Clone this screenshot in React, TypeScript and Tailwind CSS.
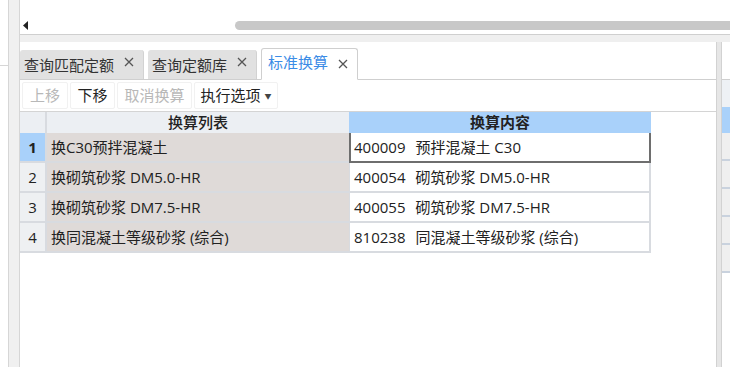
import React from 'react';

const rows = [
  { no: '1', name: '换C30预拌混凝土', code: '400009', text: '预拌混凝土 C30' },
  { no: '2', name: '换砌筑砂浆 DM5.0-HR', code: '400054', text: '砌筑砂浆 DM5.0-HR' },
  { no: '3', name: '换砌筑砂浆 DM7.5-HR', code: '400055', text: '砌筑砂浆 DM7.5-HR' },
  { no: '4', name: '换同混凝土等级砂浆 (综合)', code: '810238', text: '同混凝土等级砂浆 (综合)' },
];

const CloseIcon: React.FC = () => (
  <svg width="10" height="10" viewBox="0 0 10 10" className="shrink-0">
    <path d="M1 1 L9 9 M9 1 L1 9" stroke="#555" strokeWidth="1.3" fill="none" />
  </svg>
);

const Tab: React.FC<{ label: string; active?: boolean; width: string }> = ({ label, active, width }) => {
  if (active) {
    return (
      <div className={`${width} h-[32px] -mb-px flex items-center justify-between pl-[6px] pr-[9px] bg-white border border-[#cfcfcf] border-b-white rounded-t-[3px]`}>
        <span className="text-[15px] leading-none text-[#3b8ce6] pb-[3px]">{label}</span>
        <CloseIcon />
      </div>
    );
  }
  return (
    <div className={`${width} h-[29px] flex items-center justify-between pl-[4px] pr-[9px] bg-[#e1e1e1] rounded-t-[3px] border-r border-[#d2d2d2]`}>
      <span className="text-[15px] leading-none text-[#333] pt-[1px]">{label}</span>
      <div className="pb-[5px]"><CloseIcon /></div>
    </div>
  );
};

const ToolButton: React.FC<{ label: string; disabled?: boolean; width: string; caret?: boolean }> = ({ label, disabled, width, caret }) => (
  <div className={`${width} h-[27px] flex items-center justify-center gap-[4px] border border-[#f1f1f1] rounded-[2px] text-[15px] leading-none ${disabled ? 'text-[#b8b8b8]' : 'text-[#222]'}`}>
    <span>{label}</span>
    {caret && <span className="text-[7px] text-[#444] pt-[2px]">▼</span>}
  </div>
);

const App: React.FC = () => {
  return (
    <div
      className="w-[730px] h-[367px] flex overflow-hidden bg-white text-[#222]"
      style={{ fontFamily: '"Open Sans", "Noto Sans CJK SC", sans-serif' }}
    >
      {/* left edge panel */}
      <div className="w-[9px] shrink-0 border-r border-[#d6d6d6] bg-white flex flex-col">
        <div className="h-[66px] border-b border-[#d6d6d6]" />
      </div>
      <div className="w-[11px] shrink-0 bg-[#f0f0f0] border-r border-[#d6d6d6]" />

      {/* main */}
      <div className="flex-1 flex flex-col">
        {/* upper panel with scrollbar */}
        <div className="h-[35px] shrink-0 border-b border-[#cfcfcf] flex items-end pb-[4px]">
          <div className="w-[215px] h-[9px] flex items-center pl-[3px]">
            <svg width="5" height="9" viewBox="0 0 5 9"><path d="M5 0 L0 4.5 L5 9 Z" fill="#222" /></svg>
          </div>
          <div className="flex-1 h-[9px] bg-[#c8c8c8] rounded-l-[5px]" />
        </div>
        <div className="h-[7px] shrink-0 bg-[#efefef]" />

        <div className="flex-1 flex">
          {/* content */}
          <div className="w-[696px] shrink-0 flex flex-col">
            {/* tabs */}
            <div className="h-[38px] shrink-0 flex items-end gap-[4px] border-b border-[#cfcfcf]">
              <Tab label="查询匹配定额" width="w-[124px]" />
              <Tab label="查询定额库" width="w-[109px]" />
              <Tab label="标准换算" width="w-[97px]" active />
            </div>
            {/* toolbar */}
            <div className="h-[32px] shrink-0 flex items-center gap-[2px] pl-[2px] border-b border-[#d4d4d4]">
              <ToolButton label="上移" width="w-[46px]" disabled />
              <ToolButton label="下移" width="w-[45px]" />
              <ToolButton label="取消换算" width="w-[75px]" disabled />
              <ToolButton label="执行选项" width="w-[84px]" caret />
            </div>
            {/* grid */}
            <div className="flex-1 bg-white">
              <div className="w-[631px] text-[15px]">
                <div className="h-[21px] flex">
                  <div className="w-[27px] bg-[#eceff3] border-r-2 border-[#d8dbe0]" />
                  <div className="w-[302px] bg-[#eceff3] flex items-center justify-center font-medium">换算列表</div>
                  <div className="w-[302px] bg-[#a9d1fa] flex items-center justify-center font-semibold">换算内容</div>
                </div>
                {rows.map((r, i) => (
                  <div key={r.no} className="h-[30px] flex border-b-2 border-[#d8dbe0]">
                    <div className={`w-[27px] flex items-center justify-center border-r-2 border-[#d8dbe0] ${i === 0 ? 'bg-[#a9d1fa] font-bold' : 'bg-[#eef0f2]'}`}>{r.no}</div>
                    <div className="w-[302px] bg-[#dfdad8] flex items-center pl-[4px] whitespace-pre">{r.name}</div>
                    <div
                      className={`w-[302px] bg-white flex items-center gap-[10px] ${
                        i === 0 ? 'border-l-2 border-r-2 border-b-2 border-[#6e6e6e] pl-[3px] -mb-[2px]' : 'border-l border-r-2 border-[#d8dbe0] pl-[4px]'
                      }`}
                    >
                      <span>{r.code}</span>
                      <span className="whitespace-pre">{r.text}</span>
                    </div>
                  </div>
                ))}
              </div>
            </div>
          </div>

          {/* splitter */}
          <div className="w-[6px] shrink-0 bg-[#e6e6e6] border-l border-r border-[#d2d2d2]" />

          {/* right panel */}
          <div className="flex-1 flex flex-col">
            <div className="h-[38px] shrink-0 bg-white border-b border-[#cfcfcf]" />
            <div className="h-[27px] shrink-0 bg-[#eef1f5]" />
            <div className="h-[26px] shrink-0 bg-[#a9d1fa]" />
            {[0, 1, 2, 3, 4].map(k => (
              <div key={k} className="h-[28px] shrink-0 bg-[#efefef] border-b-2 border-[#c9d2de]" />
            ))}
          </div>
        </div>
      </div>
    </div>
  );
};

export default App;
